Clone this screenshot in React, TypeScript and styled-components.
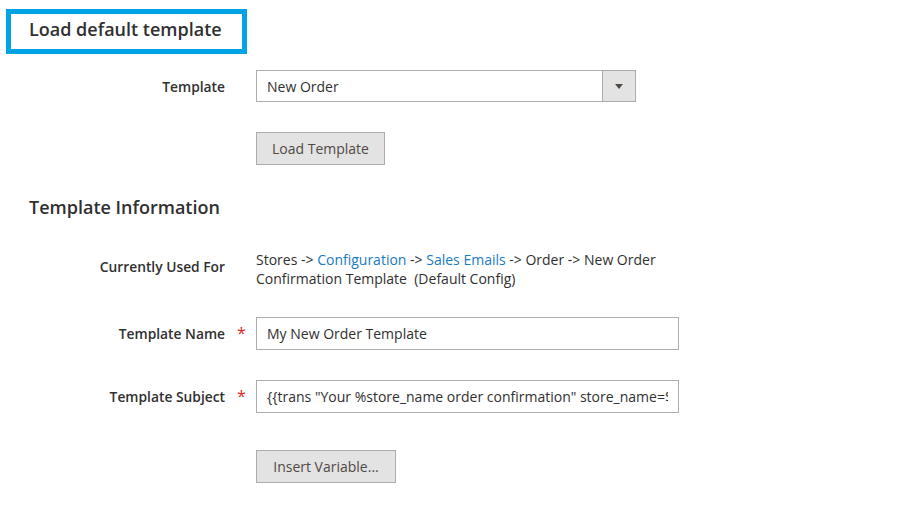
import styled, { createGlobalStyle } from 'styled-components';

const GlobalStyle = createGlobalStyle`
  body {
    margin: 0;
    background: #fff;
    font-family: "Open Sans", "Noto Sans", Arial, sans-serif;
    color: #303030;
    font-size: 14px;
  }
`;

const Page = styled.div`
  padding: 9px 0 0 6px;
  width: 915px;
  height: 506px;
  box-sizing: border-box;
`;

const HighlightBox = styled.div`
  width: 241px;
  height: 45px;
  box-sizing: border-box;
  border: 5px solid #00a3e3;
  padding: 0 18px 5px;
  display: flex;
  align-items: center;
`;

const SectionTitle = styled.h2<{ $top?: number }>`
  margin: ${(p) => p.$top ?? 0}px 0 0 ${(p) => (p.$top ? 23 : 0)}px;
  font-size: 18px;
  font-weight: 600;
  line-height: 24px;
  color: #303030;
  white-space: nowrap;
`;

const Field = styled.div<{ $top: number; $align?: string }>`
  display: grid;
  grid-template-columns: 219px 31px 422px;
  align-items: ${(p) => p.$align ?? 'center'};
  margin-top: ${(p) => p.$top}px;
`;

const Label = styled.label<{ $offset?: number }>`
  text-align: right;
  font-weight: 600;
  font-size: 13.8px;
  line-height: 19px;
  color: #303030;
  padding-top: ${(p) => p.$offset ?? 0}px;
`;

const Required = styled.span`
  color: #e22626;
  font-size: 16px;
  text-align: center;
  margin-left: 2px;
  line-height: 19px;
`;

const SelectBox = styled.div`
  width: 380px;
  height: 32px;
  box-sizing: border-box;
  border: 1px solid #adadad;
  display: flex;
  align-items: stretch;
  background: #fff;
`;

const SelectValue = styled.span`
  flex: 1;
  padding: 0 10px;
  display: flex;
  align-items: center;
  color: #303030;
`;

const ArrowButton = styled.span`
  width: 32px;
  border-left: 1px solid #adadad;
  background: #e3e3e3;
  display: flex;
  align-items: center;
  justify-content: center;
  &::after {
    content: '';
    border-left: 4px solid transparent;
    border-right: 4px solid transparent;
    border-top: 5px solid #514943;
  }
`;

const Button = styled.button<{ $width: number }>`
  width: ${(p) => p.$width}px;
  height: 33px;
  box-sizing: border-box;
  border: 1px solid #adadad;
  background: #e3e3e3;
  color: #514943;
  font-family: inherit;
  font-size: 14px;
  padding: 0;
  cursor: pointer;
`;

const TextInput = styled.input`
  width: 423px;
  height: 33px;
  box-sizing: border-box;
  border: 1px solid #adadad;
  padding: 0 10px;
  font-family: inherit;
  font-size: 14px;
  color: #303030;
  background: #fff;
  outline: none;
`;

const Value = styled.div`
  line-height: 19px;
  color: #303030;
`;

const Link = styled.a`
  color: #1979c3;
  text-decoration: none;
`;

export default function App() {
  return (
    <Page>
      <GlobalStyle />
      <HighlightBox>
        <SectionTitle>Load default template</SectionTitle>
      </HighlightBox>

      <Field $top={16}>
        <Label>Template</Label>
        <span />
        <SelectBox>
          <SelectValue>New Order</SelectValue>
          <ArrowButton />
        </SelectBox>
      </Field>

      <Field $top={30}>
        <span />
        <span />
        <Button $width={129}>Load Template</Button>
      </Field>

      <SectionTitle $top={30}>Template Information</SectionTitle>

      <Field $top={31} $align="start">
        <Label $offset={7}>Currently Used For</Label>
        <span />
        <Value>
          Stores -&gt; <Link href="#">Configuration</Link> -&gt;{' '}
          <Link href="#">Sales Emails</Link> -&gt; Order -&gt; New Order Confirmation
          Template&nbsp; (Default Config)
        </Value>
      </Field>

      <Field $top={29}>
        <Label>Template Name</Label>
        <Required>*</Required>
        <TextInput readOnly value="My New Order Template" />
      </Field>

      <Field $top={30}>
        <Label>Template Subject</Label>
        <Required>*</Required>
        <TextInput
          readOnly
          value={'{{trans "Your %store_name order confirmation" store_name=$store.getFrontendName()}}'}
        />
      </Field>

      <Field $top={37}>
        <span />
        <span />
        <Button $width={140}>Insert Variable...</Button>
      </Field>
    </Page>
  );
}
